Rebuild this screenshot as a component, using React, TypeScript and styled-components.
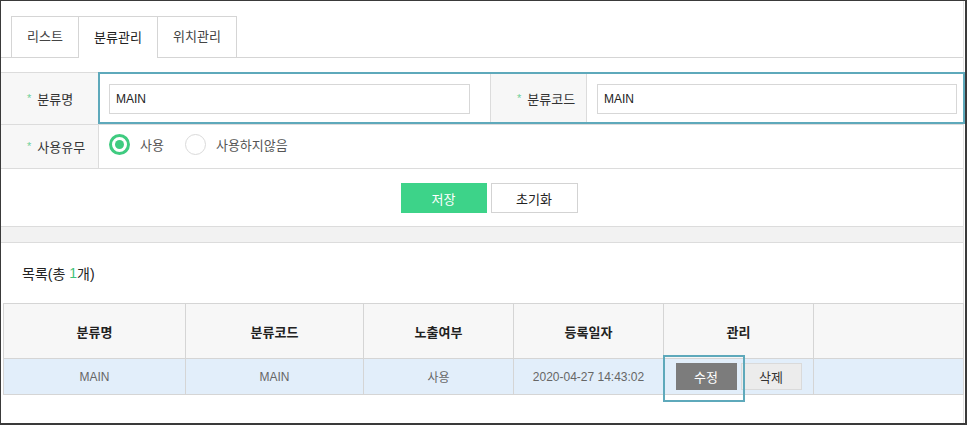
import styled, { createGlobalStyle } from 'styled-components'

const GlobalStyle = createGlobalStyle`
  html, body {
    margin: 0;
    padding: 0;
    background: #fff;
  }
  * {
    box-sizing: border-box;
  }
`

const Frame = styled.div`
  position: relative;
  width: 967px;
  height: 425px;
  border: 1px solid #3a3a3a;
  border-right-width: 2px;
  border-bottom-width: 2px;
  background: #fff;
  overflow: hidden;
  font-family: 'Liberation Sans', 'Noto Sans CJK KR', sans-serif;
  font-size: 13px;
  color: #333;
`

const Inner = styled.div`
  width: 963px;
  border-right: 1px solid #e2e2e2;
  height: 100%;
`

const TabBar = styled.div`
  display: flex;
  padding: 15px 0 0 10px;
  border-bottom: 1px solid #d5d5d5;
`

const Tab = styled.div<{ $active?: boolean; $width: number }>`
  display: flex;
  align-items: center;
  justify-content: center;
  width: ${(p) => p.$width}px;
  height: ${(p) => (p.$active ? 42 : 41)}px;
  margin-left: -1px;
  margin-bottom: ${(p) => (p.$active ? -1 : 0)}px;
  border: 1px solid #d5d5d5;
  border-bottom: none;
  background: #fff;
  color: ${(p) => (p.$active ? '#222' : '#444')};
  padding-bottom: 3px;

  &:first-child {
    margin-left: 0;
  }
`

const Form = styled.div`
  margin-top: 14px;
  border-top: 1px solid #dcdcdc;
`

const FormRow = styled.div<{ $height: number; $cols: string }>`
  display: grid;
  grid-template-columns: ${(p) => p.$cols};
  height: ${(p) => p.$height}px;
  border-bottom: 1px solid #dcdcdc;
`

const LabelCell = styled.div`
  display: flex;
  align-items: center;
  padding-left: 26px;
  background: #f7f7f7;
  border-right: 1px solid #dcdcdc;
  border-left: 1px solid #dcdcdc;
  color: #333;

  &:first-child {
    border-left: none;
  }
`

const Star = styled.span`
  color: #6fd19a;
  font-size: 11px;
  margin-right: 6px;
  position: relative;
  top: -1px;
`

const FieldCell = styled.div`
  display: flex;
  align-items: center;
  padding-left: 10px;
`

const TextInput = styled.input<{ $width: number }>`
  width: ${(p) => p.$width}px;
  height: 30px;
  border: 1px solid #d7d7d7;
  padding: 0 6px;
  font-family: 'Liberation Sans', 'Noto Sans CJK KR', sans-serif;
  font-size: 12px;
  color: #222;
  outline: none;
`

const RadioGroup = styled.div`
  display: flex;
  align-items: center;
  padding-bottom: 5px;
`

const RadioDot = styled.span<{ $checked?: boolean }>`
  display: inline-flex;
  align-items: center;
  justify-content: center;
  width: 21px;
  height: 21px;
  border-radius: 50%;
  border: ${(p) => (p.$checked ? '3px solid #3fcb80' : '1px solid #dadada')};
  background: #fff;

  &::after {
    content: '';
    display: ${(p) => (p.$checked ? 'block' : 'none')};
    width: 9px;
    height: 9px;
    border-radius: 50%;
    background: #3fcb80;
  }
`

const RadioLabel = styled.label`
  display: flex;
  align-items: center;
  gap: 10px;
  margin-right: 21px;
  color: #555;
`

const ButtonBar = styled.div`
  display: flex;
  justify-content: center;
  gap: 4px;
  padding: 14px 0 13px 14px;
`

const FormButton = styled.button<{ $primary?: boolean }>`
  width: ${(p) => (p.$primary ? 86 : 87)}px;
  height: 30px;
  border: ${(p) => (p.$primary ? 'none' : '1px solid #d3d3d3')};
  background: ${(p) => (p.$primary ? '#3dd389' : '#fff')};
  color: ${(p) => (p.$primary ? '#fff' : '#222')};
  font-family: 'Liberation Sans', 'Noto Sans CJK KR', sans-serif;
  font-size: 13px;
  padding: 0;
`

const Band = styled.div`
  height: 17px;
  background: #f2f2f2;
  border-top: 1px solid #dcdcdc;
  border-bottom: 1px solid #dcdcdc;
`

const ListTitle = styled.div`
  display: flex;
  align-items: center;
  height: 60px;
  padding-left: 21px;
  font-size: 14px;
  color: #222;

  em {
    font-style: normal;
    color: #3fc27a;
    margin-left: 4px;
  }
`

const TableWrap = styled.div`
  padding-left: 2px;
`

const Table = styled.table`
  width: 961px;
  table-layout: fixed;
  border-collapse: collapse;
  font-size: 13px;

  th,
  td {
    border: 1px solid #d5d5d5;
    text-align: center;
    padding: 0;
  }
  th {
    height: 55px;
    background: #f7f7f7;
    color: #222;
    font-weight: bold;
  }
  td {
    height: 36px;
    background: #e2eefa;
    color: #666;
    font-size: 12px;
  }
`

const ActionButton = styled.button<{ $dark?: boolean }>`
  width: 61px;
  height: 27px;
  margin: 0 2px;
  padding: 0;
  border: ${(p) => (p.$dark ? 'none' : '1px solid #dadada')};
  background: ${(p) => (p.$dark ? '#7c7c7c' : '#ececec')};
  color: ${(p) => (p.$dark ? '#fff' : '#333')};
  font-family: 'Liberation Sans', 'Noto Sans CJK KR', sans-serif;
  font-size: 13px;
  vertical-align: middle;
`

const Highlight = styled.div<{ $x: number; $y: number; $w: number; $h: number }>`
  position: absolute;
  left: ${(p) => p.$x - 1}px;
  top: ${(p) => p.$y - 1}px;
  width: ${(p) => p.$w}px;
  height: ${(p) => p.$h}px;
  border: 2px solid #5ea9bb;
  pointer-events: none;
`

const columns = [182, 178, 150, 150, 150, 150]

const App = () => {
  return (
    <>
      <GlobalStyle />
      <Frame>
        <Inner>
          <TabBar>
            <Tab $width={68}>리스트</Tab>
            <Tab $width={80} $active>
              분류관리
            </Tab>
            <Tab $width={80}>위치관리</Tab>
          </TabBar>

          <Form>
            <FormRow $height={52} $cols="98px 391px 97px 1fr">
              <LabelCell>
                <Star>*</Star>분류명
              </LabelCell>
              <FieldCell>
                <TextInput $width={361} defaultValue="MAIN" />
              </FieldCell>
              <LabelCell>
                <Star>*</Star>분류코드
              </LabelCell>
              <FieldCell>
                <TextInput $width={360} defaultValue="MAIN" />
              </FieldCell>
            </FormRow>
            <FormRow $height={44} $cols="98px 1fr">
              <LabelCell>
                <Star>*</Star>사용유무
              </LabelCell>
              <FieldCell>
                <RadioGroup>
                  <RadioLabel>
                    <RadioDot $checked />
                    사용
                  </RadioLabel>
                  <RadioLabel>
                    <RadioDot />
                    사용하지않음
                  </RadioLabel>
                </RadioGroup>
              </FieldCell>
            </FormRow>
          </Form>

          <ButtonBar>
            <FormButton $primary>저장</FormButton>
            <FormButton>초기화</FormButton>
          </ButtonBar>

          <Band />

          <ListTitle>
            목록(총<em>1</em>개)
          </ListTitle>

          <TableWrap>
            <Table>
              <colgroup>
                {columns.map((w, i) => (
                  <col key={i} style={{ width: w }} />
                ))}
              </colgroup>
              <thead>
                <tr>
                  <th>분류명</th>
                  <th>분류코드</th>
                  <th>노출여부</th>
                  <th>등록일자</th>
                  <th>관리</th>
                  <th></th>
                </tr>
              </thead>
              <tbody>
                <tr>
                  <td>MAIN</td>
                  <td>MAIN</td>
                  <td>사용</td>
                  <td>2020-04-27 14:43:02</td>
                  <td>
                    <ActionButton $dark>수정</ActionButton>
                    <ActionButton>삭제</ActionButton>
                  </td>
                  <td></td>
                </tr>
              </tbody>
            </Table>
          </TableWrap>
        </Inner>

        <Highlight $x={98} $y={72} $w={867} $h={52} />
        <Highlight $x={663} $y={355} $w={82} $h={47} />
      </Frame>
    </>
  )
}

export default App
